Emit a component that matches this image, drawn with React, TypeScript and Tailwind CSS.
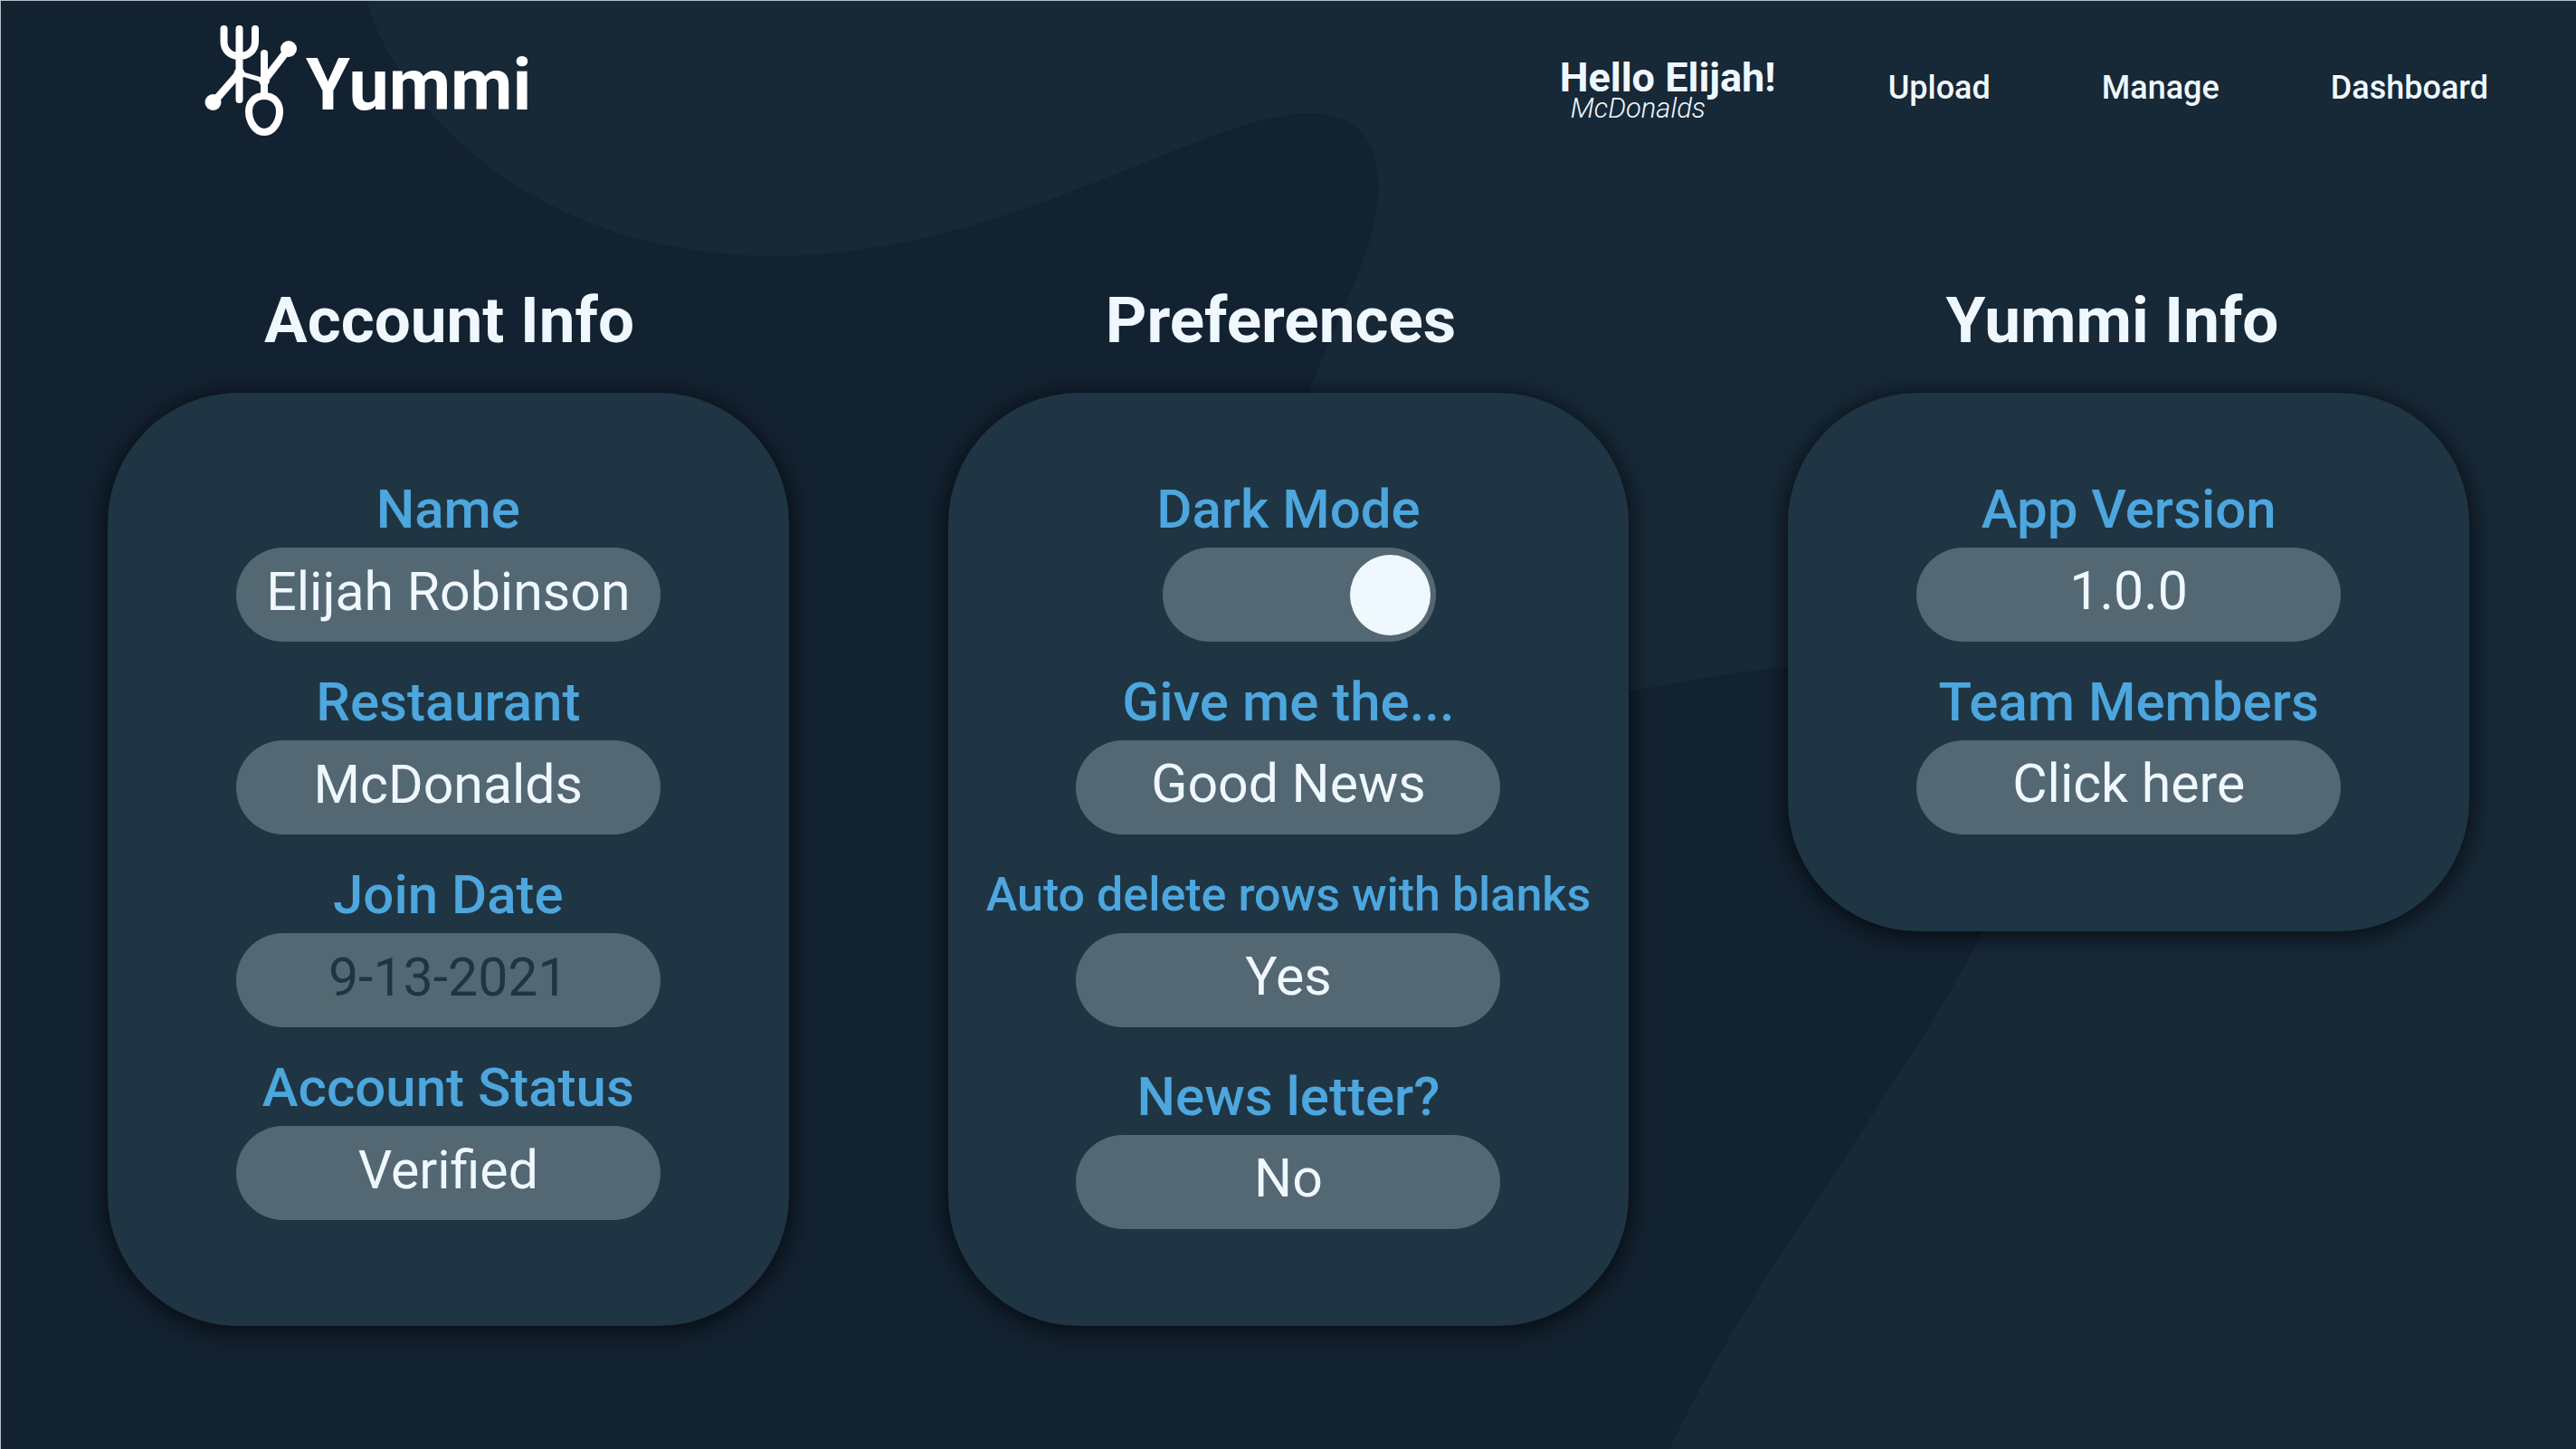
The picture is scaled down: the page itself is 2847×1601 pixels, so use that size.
import { ReactNode, useState } from "react";

const pill =
  "flex h-[104px] w-[469px] max-w-full items-center justify-center rounded-full bg-[#536872] pb-2 text-center text-[59px] font-normal text-[#f0f8ff]";

function Field({ id, label, small, children }: { id: string; label: string; small?: boolean; children: ReactNode }) {
  return (
    <div className="flex w-full flex-col items-center">
      <label
        htmlFor={id}
        className={
          small
            ? "whitespace-nowrap text-[52px] font-medium leading-[85px] text-[#4da6dd]"
            : "whitespace-nowrap text-[60px] font-medium leading-[85px] text-[#4da6dd]"
        }
      >
        {label}
      </label>
      {children}
    </div>
  );
}

function Card({ labelledBy, short, children }: { labelledBy: string; short?: boolean; children: ReactNode }) {
  return (
    <section
      aria-labelledby={labelledBy}
      className={
        (short ? "self-start " : "") +
        "flex flex-col items-center gap-6 rounded-[144px] bg-[#1f3543] pt-[86px] pb-[107px] shadow-[0_4px_24px_4px_rgba(0,0,0,0.6)]"
      }
    >
      {children}
    </section>
  );
}

function Logo() {
  return (
    <svg viewBox="0 0 104 124" className="h-[124px] w-[104px]" fill="none" stroke="white" strokeLinecap="round" aria-hidden="true">
      <path d="M21.500 4V18C21.500 28 29 34 38.500 34S56 28 56 18V4M38.500 4V82" strokeWidth="8" />
      <path d="M66 31V78" strokeWidth="8" />
      <path d="M38.500 53L66 61" strokeWidth="5" />
      <g fill="white" stroke="none">
        <path d="M35 50L7 82L13 88L41 56Z" />
        <path d="M63 58L90 23L96 29L69 64Z" />
        <circle cx="9.500" cy="85" r="9" />
        <circle cx="93" cy="26" r="9" />
        <circle cx="38.500" cy="53" r="6" />
        <circle cx="66" cy="61" r="6" />
      </g>
      <path d="M66 78C77 78 83 86 83 95C83 106 76 118 66 118S49 106 49 95C49 86 55 78 66 78Z" fill="#132231" strokeWidth="8" />
    </svg>
  );
}

function Backdrop() {
  return (
    <svg
      viewBox="0 0 2847 1601"
      preserveAspectRatio="none"
      className="absolute inset-0 -z-10 h-full w-full"
      aria-hidden="true"
    >
      <path
        fill="#132231"
        d="M0 0H404C440 120 590 282 855 282C1112 282 1330 124 1447 124C1492 124 1523 145 1523 205C1523 270 1478 350 1445 434C1390 575 1370 780 1560 792C1680 795 1850 748 1977 736C2120 725 2288 780 2189 1032C2118 1180 1928 1420 1845 1601H0Z"
      />
    </svg>
  );
}

export default function App() {
  const [dark, setDark] = useState(true);
  const [news, setNews] = useState("Good News");
  const [autoDelete, setAutoDelete] = useState(true);
  const [letter, setLetter] = useState(false);

  return (
    <div className="relative isolate min-h-screen border-t border-l border-[#b4bec3] bg-[#172837] font-['Roboto',sans-serif] text-[#f0f8ff]">
      <Backdrop />
      <header className="flex h-[190px] items-start justify-between pr-[97px] pl-[225px]">
        <a href="#home" className="flex items-start gap-2 pt-[27px] text-white">
          <Logo />
          <span className="pt-[26px] text-[79px] leading-[80px] font-bold">Yummi</span>
        </a>
        <nav className="flex items-start gap-[123px] pt-[60px]">
          <div className="w-[240px] whitespace-nowrap">
            <p className="text-[45px] leading-[50px] font-bold">Hello Elijah!</p>
            <p className="pl-3 text-[31px] leading-[18px] font-light italic">McDonalds</p>
          </div>
          <a href="#upload" className="pt-3 text-[36px] leading-[48px] font-medium">Upload</a>
          <a href="#manage" className="pt-3 text-[36px] leading-[48px] font-medium">Manage</a>
          <a href="#dashboard" className="pt-3 text-[36px] leading-[48px] font-medium">Dashboard</a>
        </nav>
      </header>

      <main className="pt-[113px]">
        <div className="grid grid-cols-3 pr-[53px] pl-9 text-center text-[71px] leading-[100px] font-bold">
          <h2 id="account">Account Info</h2>
          <h2 id="preferences">Preferences</h2>
          <h2 id="about">Yummi Info</h2>
        </div>

        <div className="mt-[30px] grid grid-cols-3 gap-[176px] px-[118px]">
          <Card labelledBy="account">
            <Field id="name" label="Name">
              <input id="name" className={pill} defaultValue="Elijah Robinson" />
            </Field>
            <Field id="restaurant" label="Restaurant">
              <input id="restaurant" className={pill} defaultValue="McDonalds" />
            </Field>
            <Field id="joined" label="Join Date">
              <input id="joined" className={pill + " disabled:text-[#1f3543]"} defaultValue="9-13-2021" disabled />
            </Field>
            <Field id="status" label="Account Status">
              <input id="status" className={pill} defaultValue="Verified" readOnly />
            </Field>
          </Card>

          <Card labelledBy="preferences">
            <Field id="dark" label="Dark Mode">
              <button
                id="dark"
                type="button"
                role="switch"
                aria-checked={dark}
                onClick={() => setDark(!dark)}
                className={
                  (dark ? "justify-end " : "justify-start ") +
                  "ml-6 flex h-[104px] w-[302px] items-center rounded-full bg-[#536872] px-[6px]"
                }
              >
                <span className="size-[89px] rounded-full bg-[#f0f8ff]" />
              </button>
            </Field>
            <Field id="news" label="Give me the...">
              <button
                id="news"
                type="button"
                className={pill}
                onClick={() => setNews(news === "Good News" ? "Bad News" : "Good News")}
              >
                {news}
              </button>
            </Field>
            <Field id="auto" label="Auto delete rows with blanks" small>
              <button id="auto" type="button" className={pill} onClick={() => setAutoDelete(!autoDelete)}>
                {autoDelete ? "Yes" : "No"}
              </button>
            </Field>
            <div className="w-full pt-[10px]">
              <Field id="letter" label="News letter?">
                <button id="letter" type="button" className={pill} onClick={() => setLetter(!letter)}>
                  {letter ? "Yes" : "No"}
                </button>
              </Field>
            </div>
          </Card>

          <Card labelledBy="about" short>
            <Field id="version" label="App Version">
              <output id="version" className={pill}>1.0.0</output>
            </Field>
            <Field id="team" label="Team Members">
              <a id="team" href="#team" className={pill}>Click here</a>
            </Field>
          </Card>
        </div>
      </main>
    </div>
  );
}
